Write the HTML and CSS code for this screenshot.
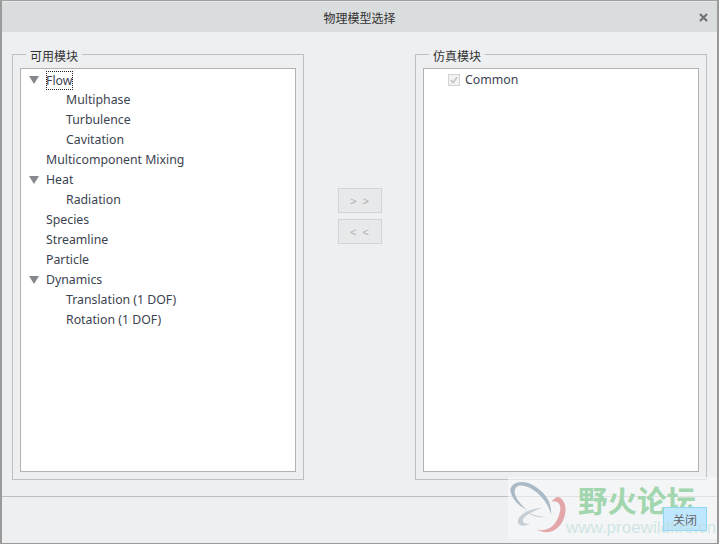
FILE: index.html
```html
<!DOCTYPE html>
<html lang="zh">
<head>
<meta charset="utf-8">
<title>物理模型选择</title>
<link rel="stylesheet" href="styles.css">
</head>
<body>
<div class="window">
  <header class="titlebar">
    <span class="title">物理模型选择</span>
    <svg class="close-x" width="9" height="9" viewBox="0 0 9 9"><path d="M1 1L8 8M8 1L1 8" stroke="#6f7276" stroke-width="2.2" fill="none"/></svg>
  </header>
  <main class="content">
    <fieldset class="group">
      <legend>可用模块</legend>
      <div class="list">
        <div class="row"><span class="tri"></span><span class="focus">Flow</span></div>
        <div class="row l2">Multiphase</div>
        <div class="row l2">Turbulence</div>
        <div class="row l2">Cavitation</div>
        <div class="row l1">Multicomponent Mixing</div>
        <div class="row"><span class="tri"></span><span>Heat</span></div>
        <div class="row l2">Radiation</div>
        <div class="row l1">Species</div>
        <div class="row l1">Streamline</div>
        <div class="row l1">Particle</div>
        <div class="row"><span class="tri"></span><span>Dynamics</span></div>
        <div class="row l2">Translation (1 DOF)</div>
        <div class="row l2">Rotation (1 DOF)</div>
      </div>
    </fieldset>
    <div class="mid">
      <button class="move">&gt; &gt;</button>
      <button class="move">&lt; &lt;</button>
    </div>
    <fieldset class="group">
      <legend>仿真模块</legend>
      <div class="list">
        <div class="row check-row">
          <svg class="check" width="12" height="12" viewBox="0 0 12 12"><rect x=".5" y=".5" width="11" height="11" fill="#f2f2f2" stroke="#d4d4d4"/><path d="M2.8 6L5 8.6L9.2 3.2" stroke="#c2c2c2" stroke-width="1.5" fill="none"/></svg>
          <span>Common</span>
        </div>
      </div>
    </fieldset>
  </main>
  <footer class="footer">
    <button class="close-btn">关闭</button>
  </footer>
  <div class="watermark">
    <svg class="wm-logo" width="63" height="60" viewBox="80 115 190 180">
      <path d="M90 150C95 125 130 118 165 140C195 160 215 185 213 225C205 195 185 165 150 145C125 132 105 135 103 155C103 170 120 195 140 210C115 200 92 175 90 150Z" fill="#a9bac6"/>
      <path d="M185 205C150 205 115 225 113 245C113 262 135 262 150 250C140 255 125 252 128 240C135 225 165 212 185 205Z" fill="#c6ced5"/>
      <path d="M130 210C150 225 175 230 197 232C175 236 145 226 130 210Z" fill="#c6ced5"/>
      <path d="M235 172C255 180 262 205 252 235C240 270 205 290 170 270C205 280 232 255 240 215C244 195 235 182 215 185C222 177 228 172 235 172Z" fill="#e3a7aa"/>
    </svg>
    <div class="wm-text">
      <div class="wm-cn">野火论坛</div>
      <div class="wm-en">www.proewildfire.cn</div>
    </div>
  </div>
</div>
</body>
</html>
```

FILE: styles.css
```css
* { box-sizing: border-box; }
html, body { margin: 0; padding: 0; }
body {
  width: 719px;
  height: 544px;
  overflow: hidden;
  font-family: "Noto Sans", "Noto Sans CJK SC", sans-serif;
  font-size: 12.3px;
  color: #3c4350;
}
.window {
  position: relative;
  width: 719px;
  height: 544px;
  display: flex;
  flex-direction: column;
  background: #eeeff1;
  border: 2px solid #9a9a9a;
  border-width: 1px 2px 1px 2px;
  border-top-color: #a0a0a0;
}
.titlebar {
  height: 31px;
  flex: none;
  display: flex;
  align-items: center;
  justify-content: center;
  background: #dadddd;
  position: relative;
  border-top: 1px solid #e8e8e8;
}
.title { font-size: 12px; color: #333; font-family: "Noto Sans CJK SC", sans-serif; }
.close-x { position: absolute; right: 9px; top: 11px; }
.content {
  flex: 1;
  display: flex;
  padding: 13px 10px 16px 10px;
  min-height: 0;
}
.group {
  width: 292px;
  margin: 0;
  padding: 4px 7px 7px 7px;
  border: 1px solid #bfbfbf;
  display: flex;
  flex-direction: column;
  min-width: 0;
}
.group legend {
  margin-left: 6px;
  padding: 2px 4px 0;
  font-size: 12px;
  line-height: 17px;
  color: #333;
  font-family: "Noto Sans CJK SC", sans-serif;
}
.list {
  flex: 1;
  height: 404px;
  background: #fff;
  border: 1px solid #b2b2b2;
  padding-top: 1px;
}
.row {
  height: 20px;
  line-height: 20px;
  display: flex;
  align-items: center;
  padding-left: 8px;
  white-space: nowrap;
}
.l1 { padding-left: 25px; }
.l2 { padding-left: 45px; }
.tri {
  width: 0;
  height: 0;
  border-left: 5px solid transparent;
  border-right: 5px solid transparent;
  border-top: 8px solid #85888c;
  margin-right: 7px;
}
.focus { outline: 1px dotted #222; outline-offset: -1px; height: 19px; line-height: 19px; padding-right: 1px; }
.check-row { padding-left: 24px; }
.check { margin-right: 5px; flex: none; }
.mid {
  width: 111px;
  flex: none;
  display: flex;
  flex-direction: column;
  align-items: center;
  gap: 6px;
  padding-top: 143px;
}
.move {
  width: 44px;
  height: 25px;
  padding: 0;
  background: #e8e9ea;
  border: 1px solid #d2d3d4;
  color: #b0b0b0;
  font: 11px "Liberation Sans", sans-serif;
  word-spacing: 3px;
}
.footer {
  flex: none;
  height: 47px;
  border-top: 1px solid #bdbebf;
  display: flex;
  justify-content: flex-end;
  padding: 10px 10px 0 0;
}
.close-btn {
  width: 44px;
  height: 24px;
  padding: 0;
  background: #bfe7ff;
  border: 1px solid #8fd6f5;
  color: #666;
  font: 12px "Noto Sans CJK SC", sans-serif;
  position: relative;
  z-index: 2;
}
.watermark {
  position: absolute;
  right: 0;
  top: 476px;
  width: 209px;
  height: 62px;
  display: flex;
  background: rgba(247, 248, 248, .62);
}
.wm-logo { margin: 1px 0 0 -1px; flex: none; }
.wm-text { margin-left: 8px; }
.wm-cn {
  font: bold 29.5px/34px "Noto Sans CJK SC", sans-serif;
  color: #a1d6ae;
  margin-top: 5px;
  white-space: nowrap;
}
.wm-en {
  font: 17px/20px "Liberation Sans", sans-serif;
  color: rgba(190, 222, 222, .7);
  margin-left: -12px;
  margin-top: 2px;
  white-space: nowrap;
  position: relative;
  z-index: 3;
}
```
